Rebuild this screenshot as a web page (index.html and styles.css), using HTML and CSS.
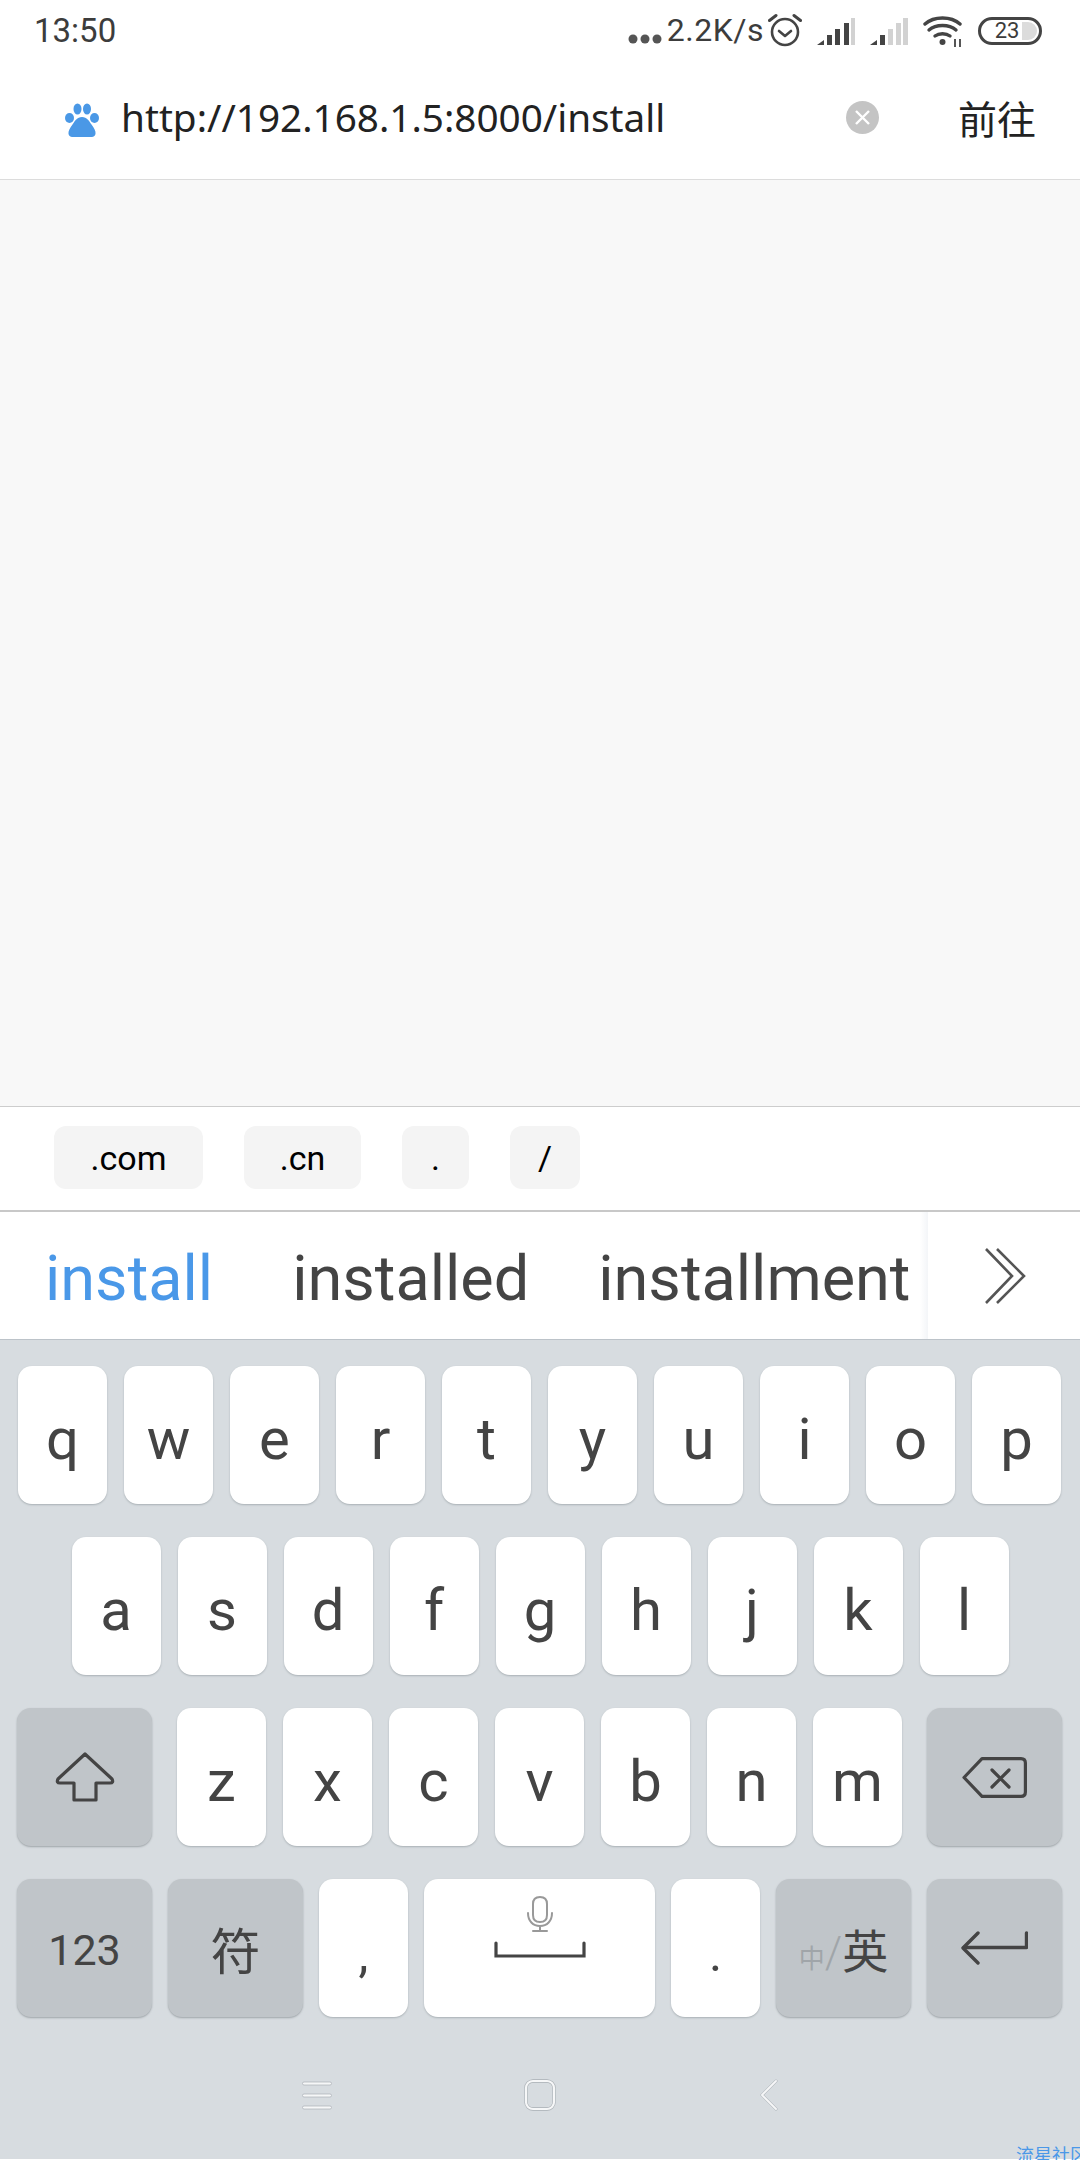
FILE: index.html
```html
<!DOCTYPE html>
<html lang="zh-CN">

<head>
  <meta charset="utf-8">
  <title>Browser address input</title>
  <link rel="stylesheet" href="styles.css">
</head>

<body>
  <div class="status">
    <span class="clock">13:50</span>
    <div class="status-right">
      <svg class="dots" width="34" height="10" viewBox="0 0 34 10"><circle cx="5" cy="5" r="4.5" /><circle cx="17" cy="5" r="4.5" /><circle cx="29" cy="5" r="4.5" /></svg>
      <span class="speed">2.2K/s</span>
      <svg class="alarm" width="34" height="34" viewBox="0 0 34 34" fill="none" stroke="#444" stroke-width="2.6" stroke-linecap="round" stroke-linejoin="round">
        <circle cx="17" cy="19" r="13" />
        <path d="M11 18l6 5 6-5" />
        <path d="M1.5 7.5L8 2.5M32.5 7.5L26 2.5" stroke-width="3" />
      </svg>
      <svg class="signal" width="38" height="27" viewBox="0 0 38 27">
        <path d="M0 27L7 22V27Z" fill="#444" />
        <rect x="10" y="17" width="5" height="10" fill="#444" />
        <rect x="18" y="11" width="5" height="16" fill="#444" />
        <rect x="27" y="5" width="5" height="22" fill="#444" />
        <rect x="34" y="0" width="4" height="27" fill="#d2d2d2" />
      </svg>
      <svg class="signal" width="38" height="27" viewBox="0 0 38 27">
        <path d="M0 27L7 22V27Z" fill="#444" />
        <rect x="10" y="17" width="5" height="10" fill="#444" />
        <rect x="18" y="11" width="5" height="16" fill="#d2d2d2" />
        <rect x="26" y="5" width="5" height="22" fill="#d2d2d2" />
        <rect x="33" y="0" width="5" height="27" fill="#d2d2d2" />
      </svg>
      <svg class="wifi" width="40" height="32" viewBox="0 0 40 32" fill="none" stroke="#444" stroke-width="3.4" stroke-linecap="round">
        <path d="M2 9C11 1 28 1 37 9" />
        <path d="M6 15C13 9 26 9 33 15" />
        <path d="M12 21C16 18 23 18 27 21" />
        <circle cx="19.5" cy="27" r="3" fill="#444" stroke="none" />
        <path d="M32 24V32M37 24V32" stroke-width="1.8" stroke-linecap="butt" />
      </svg>
      <div class="battery"><span>23</span></div>
    </div>
  </div>

  <div class="toolbar">
    <svg class="paw" width="34" height="34" viewBox="0 0 34 34" fill="#4a98e6">
      <ellipse cx="4.5" cy="15" rx="4.5" ry="5" />
      <ellipse cx="12.5" cy="6" rx="4" ry="5.5" />
      <ellipse cx="22" cy="6" rx="4" ry="5.5" />
      <ellipse cx="29.5" cy="15" rx="4.5" ry="5" />
      <path d="M17 14C12 14 10 18 7.5 21.5C5 25 3 28 3.5 31C4 33.5 6 34 9 34H25C28 34 30 33.5 30.5 31C31 28 29 25 26.5 21.5C24 18 22 14 17 14Z" />
    </svg>
    <span class="url">http://192.168.1.5:8000/install</span>
    <svg class="clear" width="33" height="33" viewBox="0 0 33 33">
      <circle cx="16.5" cy="16.5" r="16.5" fill="#c4c4c4" />
      <path d="M10 10L23 23M23 10L10 23" stroke="#fff" stroke-width="2.4" />
    </svg>
    <span class="go">前往</span>
  </div>

  <div class="content"></div>

  <div class="chips">
    <span class="chip chip-com">.com</span>
    <span class="chip chip-cn">.cn</span>
    <span class="chip chip-dot">.</span>
    <span class="chip chip-slash">/</span>
  </div>

  <div class="suggestions">
    <span class="word word-active">install</span>
    <span class="word word-second">installed</span>
    <span class="word word-third">installment</span>
    <div class="more">
      <svg width="42" height="56" viewBox="0 0 42 56" fill="none" stroke="#555" stroke-width="2.6">
        <path d="M1 1L27 28L1 55" />
        <path d="M12 1L39 28L12 55" />
      </svg>
    </div>
  </div>

  <div class="keyboard">
    <div class="row row-top">
      <div class="key">q</div>
      <div class="key">w</div>
      <div class="key">e</div>
      <div class="key">r</div>
      <div class="key">t</div>
      <div class="key">y</div>
      <div class="key">u</div>
      <div class="key">i</div>
      <div class="key">o</div>
      <div class="key">p</div>
    </div>
    <div class="row">
      <div class="key">a</div>
      <div class="key">s</div>
      <div class="key">d</div>
      <div class="key">f</div>
      <div class="key">g</div>
      <div class="key">h</div>
      <div class="key">j</div>
      <div class="key">k</div>
      <div class="key">l</div>
    </div>
    <div class="row row-split">
      <div class="key key-fn">
        <svg width="60" height="50" viewBox="0 0 60 50" fill="none" stroke="#444" stroke-width="3.2" stroke-linejoin="round">
          <path d="M30 2L57 27Q59 31 55 31H41V48H19V31H5Q1 31 3 27Z" />
        </svg>
      </div>
      <div class="letters">
        <div class="key">z</div>
        <div class="key">x</div>
        <div class="key">c</div>
        <div class="key">v</div>
        <div class="key">b</div>
        <div class="key">n</div>
        <div class="key">m</div>
      </div>
      <div class="key key-fn">
        <svg width="65" height="41" viewBox="0 0 65 41" fill="none" stroke="#444" stroke-width="3.2" stroke-linejoin="round" stroke-linecap="round">
          <path d="M20 1.6H59Q63.4 1.6 63.4 6V35Q63.4 39.4 59 39.4H20L2 20.5Z" />
          <path d="M30 13L47 30M47 13L30 30" />
        </svg>
      </div>
    </div>
    <div class="row row-split">
      <div class="key key-fn key-num">123</div>
      <div class="key key-fn key-sym">符</div>
      <div class="key key-mark">,</div>
      <div class="key key-space">
        <svg width="92" height="62" viewBox="0 0 92 62" fill="none" stroke-linecap="round">
          <path d="M46 1C41 1 39 4 39 8V19C39 23 41 26 46 26C51 26 53 23 53 19V8C53 4 51 1 46 1Z" stroke="#999" stroke-width="2" />
          <path d="M34 17C34 25 39 30 46 30C53 30 58 25 58 17M46 30V34M39 35H53" stroke="#999" stroke-width="2" />
          <path d="M2 47V60H90V47" stroke="#444" stroke-width="3.2" />
        </svg>
      </div>
      <div class="key key-mark">.</div>
      <div class="key key-fn key-lang"><span class="lang-off">中</span><span class="lang-slash">/</span><span class="lang-on">英</span></div>
      <div class="key key-fn">
        <svg width="67" height="34" viewBox="0 0 67 34" fill="none" stroke="#444" stroke-width="3.4" stroke-linecap="round" stroke-linejoin="round">
          <path d="M65.5 2V16.5H3" />
          <path d="M17 2L2 17L17 32" />
        </svg>
      </div>
    </div>

    <div class="navbar">
      <svg class="nav-menu" width="30" height="30" viewBox="0 0 30 30" fill="#f6f7f8" stroke="#a9afb4" stroke-width="0.7">
        <rect x="0.5" y="2" width="29" height="3" rx="1.5" />
        <rect x="0.5" y="14" width="29" height="3" rx="1.5" />
        <rect x="0.5" y="26" width="29" height="3" rx="1.5" />
      </svg>
      <svg class="nav-home" width="32" height="32" viewBox="0 0 32 32" fill="none">
        <rect x="2" y="2" width="28" height="28" rx="7" stroke="#a9afb4" stroke-width="3.4" />
        <rect x="2" y="2" width="28" height="28" rx="7" stroke="#f6f7f8" stroke-width="2.2" />
      </svg>
      <svg class="nav-back" width="18" height="32" viewBox="0 0 18 32" fill="none" stroke-linecap="round">
        <path d="M16 2L2 16L16 30" stroke="#a9afb4" stroke-width="3" />
        <path d="M16 2L2 16L16 30" stroke="#f6f7f8" stroke-width="2" />
      </svg>
    </div>
  </div>

  <span class="watermark">流星社区</span>
</body>

</html>
```

FILE: styles.css
```css
html, body {
  margin: 0;
  padding: 0;
}

body {
  position: relative;
  width: 1080px;
  height: 2160px;
  overflow: hidden;
  background-color: #fff;
  font-family: 'Roboto', 'Noto Sans CJK SC', sans-serif;
}

.status {
  display: flex;
  align-items: center;
  justify-content: space-between;
  height: 60px;
  padding: 0 38px 0 34px;
  color: #3c3c3c;
}

.clock {
  font-size: 33px;
}

.status-right {
  display: flex;
  align-items: center;
}

.dots {
  margin: 18px 5px 0 0;
  fill: #555;
}

.speed {
  font-size: 32px;
  letter-spacing: 0.5px;
  margin-right: 4px;
}

.alarm {
  margin-right: 15px;
}

.signal {
  margin: 2px 15px 0 0;
}

.wifi {
  margin: 2px 15px 0 0;
}

.battery {
  position: relative;
  display: flex;
  align-items: center;
  justify-content: center;
  box-sizing: border-box;
  width: 64px;
  height: 28px;
  margin-top: 1px;
  padding-right: 6px;
  border: 3px solid #444;
  border-radius: 14px;
  font-size: 22px;
  line-height: 1;
}

.battery::after {
  content: "";
  position: absolute;
  top: 2px;
  right: 2px;
  bottom: 2px;
  width: 15px;
  border-radius: 0 10px 10px 0;
  background-color: #dcdcdc;
}

.toolbar {
  display: flex;
  align-items: center;
  height: 119px;
  padding-left: 65px;
  border-bottom: 1px solid #dcdcdc;
  color: #222;
}

.paw {
  margin-right: 22px;
}

.url {
  flex: 1;
  margin-bottom: 5px;
  font-family: 'Noto Sans', sans-serif;
  font-size: 38.7px;
}

.clear {
  margin: -4px 79px 0 0;
}

.go {
  width: 122px;
  margin-bottom: 5px;
  font-size: 39px;
}

.content {
  height: 926px;
  background-color: #f8f8f8;
}

.chips {
  display: flex;
  align-items: center;
  gap: 41px;
  box-sizing: border-box;
  height: 104px;
  padding: 0 0 2px 54px;
  border-top: 1px solid #cdcdcd;
}

.chip {
  display: flex;
  align-items: center;
  justify-content: center;
  height: 63px;
  border-radius: 12px;
  background-color: #f4f4f4;
  color: #000;
  font-size: 34px;
}

.chip-com { width: 149px; }
.chip-cn { width: 117px; }
.chip-dot { width: 67px; }
.chip-slash { width: 70px; }

.suggestions {
  display: flex;
  align-items: center;
  box-sizing: border-box;
  height: 129px;
  padding: 5px 0 0 45px;
  border-top: 2px solid #c8c8c8;
}

.word {
  color: #444;
  font-size: 63px;
  white-space: nowrap;
}

.word-active {
  color: #4a98e8;
}

.word-second {
  margin-left: 79px;
}

.word-third {
  margin-left: 69px;
}

.more {
  display: flex;
  align-items: center;
  justify-content: center;
  align-self: stretch;
  box-sizing: border-box;
  width: 160px;
  margin: -5px 0 0 auto;
  padding-left: 11px;
  background: linear-gradient(to right, #fff, #f3f5f8 8px, #fff 8px);
}

.keyboard {
  display: flex;
  flex-direction: column;
  gap: 33px;
  height: 820px;
  padding-top: 26px;
  box-sizing: border-box;
  border-top: 1px solid #bcc3c9;
  background-color: #d7dce0;
}

.row {
  display: flex;
  justify-content: center;
  gap: 17px;
}

.row-top {
  padding-right: 1px;
}

.row-split {
  justify-content: space-between;
  gap: 0;
  padding: 0 18px 0 17px;
}

.letters {
  display: flex;
  gap: 17px;
}

.key {
  display: flex;
  align-items: center;
  justify-content: center;
  box-sizing: border-box;
  width: 89px;
  height: 138px;
  padding-top: 8px;
  border-radius: 14px;
  background-color: #fff;
  box-shadow: 0 1px 2px #a9b0b5;
  color: #444;
  font-size: 58px;
}

.key-fn {
  width: 135px;
  padding-top: 0;
  background-color: #c0c5c9;
  box-shadow: 0 1px 2px #9ea4a8;
}

.key-num {
  padding-top: 4px;
  font-size: 43px;
}

.key-sym {
  font-size: 50px;
}

.key-mark {
  padding-top: 12px;
  font-size: 50px;
}

.key-space {
  width: 231px;
  padding: 0 0 42px;
}

.key-lang {
  align-items: baseline;
  padding-top: 36px;
}

.lang-off {
  color: #a0a5a9;
  font-size: 26px;
}

.lang-slash {
  color: #a0a5a9;
  font-size: 44px;
  font-weight: 300;
}

.lang-on {
  font-size: 46px;
}

.navbar {
  display: flex;
  align-items: center;
  height: 32px;
  margin-top: 29px;
  padding-left: 302px;
}

.nav-home {
  margin-left: 192px;
}

.nav-back {
  margin-left: 204px;
}

.watermark {
  position: absolute;
  right: -8px;
  bottom: -6px;
  color: #4a98e8;
  font-size: 18px;
  line-height: 20px;
}
```
